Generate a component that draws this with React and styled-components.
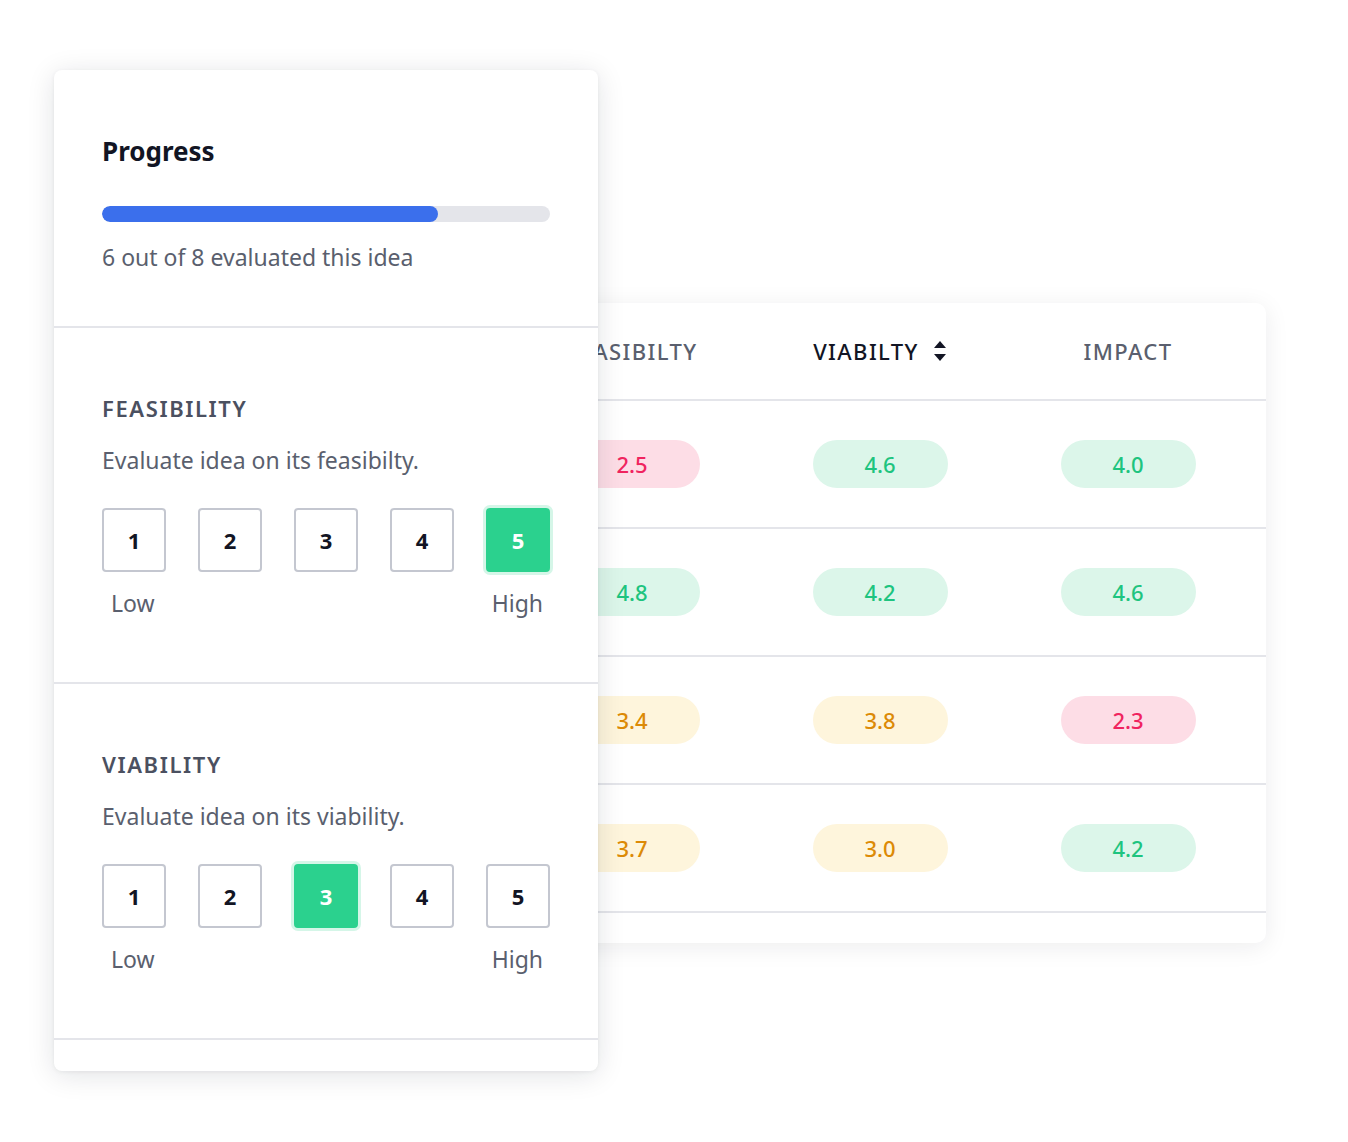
import React from 'react';
import styled, { createGlobalStyle, css } from 'styled-components';

const GlobalStyle = createGlobalStyle`
  body {
    margin: 0;
    background: #ffffff;
    font-family: "Noto Sans", "Open Sans", sans-serif;
    color: #1a1d2b;
  }
`;

const Stage = styled.div`
  display: grid;
  width: 1348px;
  height: 1142px;
  overflow: hidden;
`;

const Panel = styled.div`
  grid-area: 1 / 1;
  align-self: start;
  justify-self: start;
  margin: 70px 0 0 54px;
  width: 544px;
  background: #fff;
  border-radius: 8px;
  box-shadow: 0 4px 28px rgba(20, 24, 40, 0.12), 0 1px 4px rgba(20, 24, 40, 0.06);
  position: relative;
  z-index: 1;
`;

const Section = styled.div`
  padding: ${p => p.$pad || '67px 48px 64px'};
  border-bottom: 2px solid #e4e5ea;
  &:last-child {
    border-bottom: none;
    padding: 0;
    height: 31px;
  }
`;

const Title = styled.h2`
  margin: 0;
  font-size: 26px;
  line-height: 34px;
  font-weight: 700;
  color: #121524;
`;

const Track = styled.div`
  margin-top: 38px;
  height: 16px;
  border-radius: 8px;
  background: #e4e5ea;
  overflow: hidden;
`;

const Fill = styled.div`
  height: 100%;
  border-radius: 8px;
  background: #3b6fec;
`;

const Caption = styled.p`
  margin: 19px 0 0;
  font-size: 23px;
  line-height: 32px;
  color: #5a5f6e;
`;

const Heading = styled.h3`
  margin: 0;
  font-size: 22px;
  line-height: 26px;
  font-weight: 600;
  letter-spacing: 1.6px;
  color: #4b5060;
  text-transform: uppercase;
`;

const Desc = styled.p`
  margin: 23px 0 0;
  font-size: 23px;
  line-height: 32px;
  color: #5a5f6e;
`;

const Scale = styled.div`
  margin-top: 32px;
  display: flex;
  justify-content: space-between;
`;

const Step = styled.button`
  width: 64px;
  height: 64px;
  box-sizing: border-box;
  border: 2px solid #c4c7d0;
  border-radius: 4px;
  background: #fff;
  font-family: inherit;
  font-size: 22px;
  font-weight: 700;
  color: #121524;
  padding: 0;
  ${p => p.$active && css`
    background: #2bd18e;
    border-color: #2bd18e;
    color: #fff;
    box-shadow: 0 0 0 3px #d5f6e8;
  `}
`;

const Ends = styled.div`
  margin-top: 16px;
  display: flex;
  justify-content: space-between;
  font-size: 23px;
  line-height: 30px;
  color: #5a5f6e;
  padding: 0 7px 0 9px;
`;

const TableCard = styled.div`
  grid-area: 1 / 1;
  align-self: start;
  justify-self: start;
  margin: 303px 0 0 508px;
  width: 758px;
  padding-bottom: 30px;
  background: #fff;
  border-radius: 10px;
  box-shadow: 0 4px 24px rgba(20, 24, 40, 0.08);
`;

const Row = styled.div`
  display: grid;
  grid-template-columns: repeat(3, 248px);
  align-items: center;
  height: ${p => p.$head ? '96px' : '126px'};
  border-bottom: 2px solid #e4e5ea;
`;

const HeadCell = styled.div`
  display: flex;
  align-items: center;
  justify-content: center;
  gap: 14px;
  font-size: 22px;
  font-weight: 500;
  letter-spacing: 1.4px;
  color: ${p => p.$active ? '#121524' : '#5a5f6e'};
`;

const Cell = styled.div`
  display: flex;
  justify-content: center;
`;

const tones = {
  red: { bg: '#fddde6', fg: '#f0245f' },
  green: { bg: '#dcf6ea', fg: '#1ec47f' },
  yellow: { bg: '#fef5dc', fg: '#dc8a06' },
};

const Pill = styled.span`
  width: 135px;
  height: 48px;
  border-radius: 24px;
  display: flex;
  align-items: center;
  justify-content: center;
  font-size: 22px;
  font-weight: 500;
  background: ${p => tones[p.$tone].bg};
  color: ${p => tones[p.$tone].fg};
`;

const SortIcon = () => (
  <svg width="14" height="24" viewBox="0 0 14 24">
    <path d="M7 2 L13 9 L1 9 Z" fill="#121524" />
    <path d="M1 15 L13 15 L7 22 Z" fill="#121524" />
  </svg>
);

const tone = v => (v < 3 ? 'red' : v < 4 ? 'yellow' : 'green');

const rows = [
  [2.5, 4.6, 4.0],
  [4.8, 4.2, 4.6],
  [3.4, 3.8, 2.3],
  [3.7, 3.0, 4.2],
];

const Rating = ({ title, desc, value }) => (
  <Section>
    <Heading>{title}</Heading>
    <Desc>{desc}</Desc>
    <Scale>
      {[1, 2, 3, 4, 5].map(n => (
        <Step key={n} $active={n === value}>{n}</Step>
      ))}
    </Scale>
    <Ends>
      <span>Low</span>
      <span>High</span>
    </Ends>
  </Section>
);

export default function App() {
  const done = 6;
  const total = 8;
  return (
    <Stage>
      <GlobalStyle />
      <TableCard>
        <Row $head>
          <HeadCell>FEASIBILTY</HeadCell>
          <HeadCell $active>VIABILTY <SortIcon /></HeadCell>
          <HeadCell>IMPACT</HeadCell>
        </Row>
        {rows.map((r, i) => (
          <Row key={i}>
            {r.map((v, j) => (
              <Cell key={j}>
                <Pill $tone={tone(v)}>{v.toFixed(1)}</Pill>
              </Cell>
            ))}
          </Row>
        ))}
      </TableCard>
      <Panel>
        <Section $pad="64px 48px 53px">
          <Title>Progress</Title>
          <Track>
            <Fill style={{ width: `${(done / total) * 100}%` }} />
          </Track>
          <Caption>{done} out of {total} evaluated this idea</Caption>
        </Section>
        <Rating title="Feasibility" desc="Evaluate idea on its feasibilty." value={5} />
        <Rating title="Viability" desc="Evaluate idea on its viability." value={3} />
        <Section />
      </Panel>
    </Stage>
  );
}
